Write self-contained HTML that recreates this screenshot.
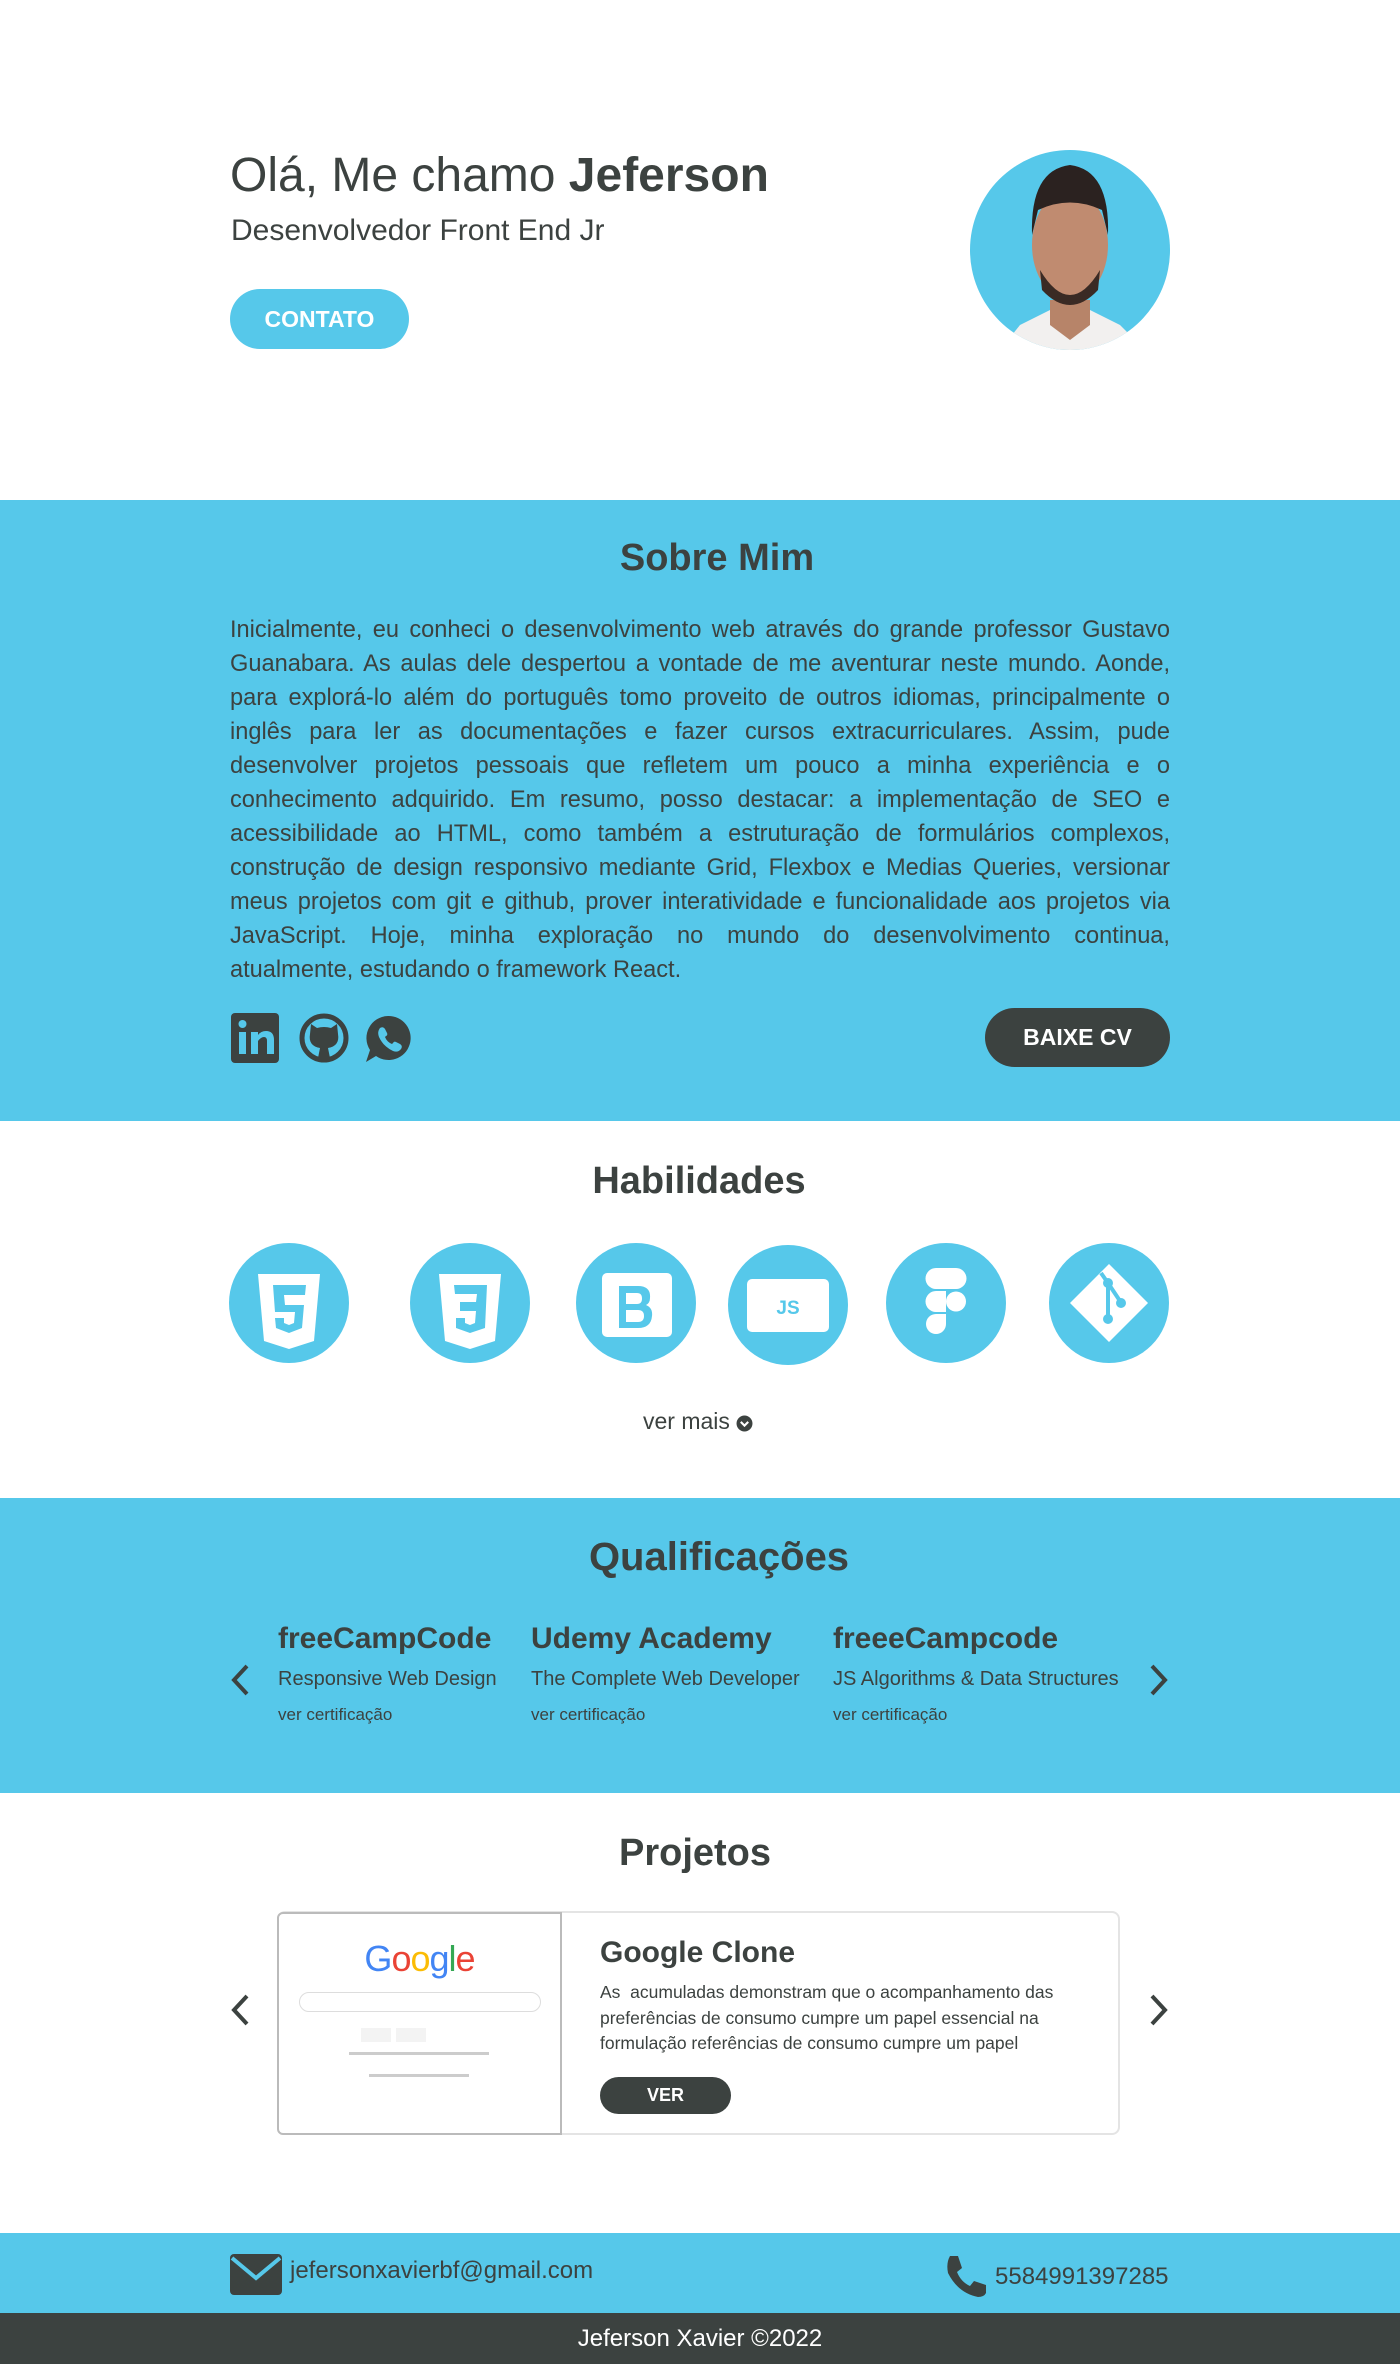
<!DOCTYPE html>
<html><head><meta charset="utf-8"><style>
*{margin:0;padding:0;box-sizing:border-box}
body{width:1400px;height:2364px;position:relative;font-family:"Liberation Sans",Arial,sans-serif;color:#3c4240;background:#fff;overflow:hidden}
.a{position:absolute}
.blue{background:#56c8ea}
.btn{border-radius:30px;font-weight:bold;display:flex;align-items:center;justify-content:center}
h2{position:absolute;left:0;width:1400px;text-align:center;font-size:38px;font-weight:bold}
.circ{position:absolute;width:120px;height:120px;border-radius:50%;background:#56c8ea;top:1243px}
.circ svg{position:absolute;left:0;top:0}
.q{position:absolute;top:1619px}
.q b{display:block;font-size:30px;line-height:40px}
.q .s{font-size:20px;margin-top:6px;line-height:28px}
.q .v{font-size:17px;margin-top:12px}
</style></head><body>

<div class="a" style="left:230px;top:148px;font-size:48px;line-height:56px">Olá, Me chamo <b>Jeferson</b></div>
<div class="a" style="left:231px;top:214px;font-size:30px">Desenvolvedor Front End Jr</div>
<div class="a btn blue" style="left:230px;top:289px;width:179px;height:60px;color:#fff;font-size:23px">CONTATO</div>
<div class="a" style="left:970px;top:150px;width:200px;height:200px;border-radius:50%;background:#56c8ea;overflow:hidden">
<svg width="200" height="200" viewBox="0 0 200 200">
<path d="M30 200 L50 175 L80 160 L120 160 L150 175 L175 200Z" fill="#f2f0ef"/>
<path d="M80 150 L80 175 L100 190 L120 175 L120 150Z" fill="#b78469"/>
<ellipse cx="100" cy="95" rx="38" ry="55" fill="#c08b70"/>
<path d="M62 85 Q60 20 100 15 Q140 20 138 85 L132 60 Q100 45 68 60Z" fill="#2b2220"/>
<path d="M70 120 Q100 170 130 120 L128 140 Q100 170 72 140Z" fill="#3a2a24"/>
</svg></div>

<div class="a blue" style="left:0;top:500px;width:1400px;height:621px"></div>
<h2 style="top:537px;left:17px">Sobre Mim</h2>
<div class="a" style="left:230px;top:613px;width:940px;font-size:23.6px;line-height:34px;text-align:justify;text-align-last:justify">Inicialmente, eu conheci o desenvolvimento web através do grande professor Gustavo Guanabara. As aulas dele despertou a vontade de me aventurar neste mundo. Aonde, para explorá-lo além do português tomo proveito de outros idiomas, principalmente o inglês para ler as documentações e fazer cursos extracurriculares. Assim, pude desenvolver projetos pessoais que refletem um pouco a minha experiência e o conhecimento adquirido. Em resumo, posso destacar: a implementação de SEO e acessibilidade ao HTML, como também a estruturação de formulários complexos, construção de design responsivo mediante Grid, Flexbox e Medias Queries, versionar meus projetos com git e github, prover interatividade e funcionalidade aos projetos via JavaScript. Hoje, minha exploração no mundo do desenvolvimento continua,</div>
<div class="a" style="left:230px;top:953px;font-size:23.6px;line-height:34px">atualmente, estudando o framework React.</div>
<svg class="a" style="left:230px;top:1012px" width="190" height="52" viewBox="0 0 190 52">
<rect x="1" y="1" width="48" height="50" rx="4" fill="#3c4240"/>
<rect x="9" y="20" width="7" height="22" fill="#56c8ea"/><circle cx="12.5" cy="12" r="4" fill="#56c8ea"/>
<path d="M21 20h7v3q3-4 8-4q8 0 8 9v14h-7v-13q0-4-3-4t-6 4v13h-7z" fill="#56c8ea"/>
<circle cx="94" cy="26" r="22" fill="none" stroke="#3c4240" stroke-width="5"/>
<path d="M80 22 L81 12 L87 16 Q94 14 101 16 L107 12 L108 22 Q110 34 98 36 L100 46 L88 46 L90 36 Q78 34 80 22Z" fill="#3c4240"/>
<path d="M158 4a22 22 0 1 1 -12 40 L136 50 L140 38 A22 22 0 0 1 158 4Z" fill="#3c4240"/>
<path d="M150 16q3-2 5 1l2 4q1 2-1 3l-1 1q2 5 7 7l1-1q1-2 3-1l4 2q3 2 1 5q-3 4-8 2q-10-5-14-14q-2-5 1-9z" fill="#56c8ea"/>
</svg>
<div class="a btn" style="left:985px;top:1008px;width:185px;height:59px;background:#3c4240;color:#fff;font-size:23px">BAIXE CV</div>

<h2 style="top:1160px;left:-1px">Habilidades</h2>
<div class="circ" style="left:229px"><svg width="120" height="120" viewBox="0 0 120 120"><path d="M29 31h62l-6 67-25 8-25-8z" fill="#fff"/><path d="M44 42h33l-1 10h-21l1 10h19l-2 23-13 5-13-5-1-10h9v5l5 2 5-2 1-11h-20z" fill="#56c8ea"/></svg></div>
<div class="circ" style="left:410px"><svg width="120" height="120" viewBox="0 0 120 120"><path d="M29 31h62l-6 67-25 8-25-8z" fill="#fff"/><path d="M44 42h33l-2 43-15 5-14-5v-10h9v5l5 2 5-2 1-12h-16v-9h16l1-8h-22z" fill="#56c8ea"/></svg></div>
<div class="circ" style="left:576px"><svg width="120" height="120" viewBox="0 0 120 120"><rect x="26" y="30" width="70" height="64" rx="5" fill="#fff"/><path d="M43 43h19q13 0 12 12q0 5-4 7q7 3 6 11q-1 12-14 12h-19z M50 50v11h11q5 0 5-5.5t-5-5.5z M50 67v12h12q6 0 6-6t-6-6z" fill="#56c8ea" fill-rule="evenodd"/></svg></div>
<div class="circ" style="left:728px;top:1245px"><svg width="120" height="120" viewBox="0 0 120 120"><rect x="19" y="34" width="82" height="53" rx="5" fill="#fff"/><text x="60" y="69" text-anchor="middle" font-family="Liberation Sans" font-weight="bold" font-size="19" fill="#56c8ea">JS</text></svg></div>
<div class="circ" style="left:886px"><svg width="120" height="120" viewBox="0 0 120 120"><path d="M60 25h-10a10 10 0 0 0 0 21h10z M60 25h10a10 10 0 0 1 0 21h-10z M60 48h-10a10 10 0 0 0 0 21h10z M50 71a10 10 0 1 0 10 10v-10z" fill="#fff"/><circle cx="70" cy="58.5" r="10" fill="#fff"/></svg></div>
<div class="circ" style="left:1049px"><svg width="120" height="120" viewBox="0 0 120 120"><path d="M60 21l39 39-39 39-39-39z" fill="#fff"/><path d="M52 30l7 10v34 M59 40l12 18" stroke="#56c8ea" stroke-width="4" fill="none"/><circle cx="59" cy="40" r="5" fill="#56c8ea"/><circle cx="72" cy="60" r="5" fill="#56c8ea"/><circle cx="59" cy="76" r="5" fill="#56c8ea"/></svg></div>
<div class="a" style="left:643px;top:1408px;font-size:23px">ver mais <svg width="17" height="17" viewBox="0 0 16 16" style="vertical-align:-3px"><circle cx="8" cy="8" r="7.5" fill="#3c4240"/><path d="M4.5 6.5l3.5 3.5 3.5-3.5" stroke="#fff" stroke-width="2" fill="none"/></svg></div>

<div class="a blue" style="left:0;top:1498px;width:1400px;height:295px"></div>
<h2 style="top:1535px;left:19px;font-size:40px">Qualificações</h2>
<svg class="a" style="left:229px;top:1664px" width="22" height="32"><path d="M18 2L5 16l13 14" stroke="#3c4240" stroke-width="4" fill="none"/></svg>
<svg class="a" style="left:1148px;top:1664px" width="22" height="32"><path d="M4 2l13 14-13 14" stroke="#3c4240" stroke-width="4" fill="none"/></svg>
<div class="q" style="left:278px"><b>freeCampCode</b><div class="s">Responsive Web Design</div><div class="v">ver certificação</div></div>
<div class="q" style="left:531px"><b>Udemy Academy</b><div class="s">The Complete Web Developer</div><div class="v">ver certificação</div></div>
<div class="q" style="left:833px"><b>freeeCampcode</b><div class="s">JS Algorithms &amp; Data Structures</div><div class="v">ver certificação</div></div>

<h2 style="top:1832px;left:-5px">Projetos</h2>
<svg class="a" style="left:229px;top:1994px" width="22" height="32"><path d="M18 2L5 16l13 14" stroke="#3c4240" stroke-width="4" fill="none"/></svg>
<svg class="a" style="left:1148px;top:1994px" width="22" height="32"><path d="M4 2l13 14-13 14" stroke="#3c4240" stroke-width="4" fill="none"/></svg>
<div class="a" style="left:277px;top:1911px;width:843px;height:224px;border:2px solid #e4e4e4;border-radius:8px"></div>
<div class="a" style="left:277px;top:1912px;width:285px;height:223px;border:2px solid #bbb;border-radius:6px 0 0 6px;background:#fff">
<div class="a" style="left:0;width:281px;top:24px;text-align:center;font-size:36px;letter-spacing:-1px"><span style="color:#4285f4">G</span><span style="color:#ea4335">o</span><span style="color:#fbbc05">o</span><span style="color:#4285f4">g</span><span style="color:#34a853">l</span><span style="color:#ea4335">e</span></div>
<div class="a" style="left:20px;top:78px;width:242px;height:20px;border:1px solid #ddd;border-radius:10px"></div>
<div class="a" style="left:82px;top:114px;width:30px;height:14px;background:#f3f3f3"></div>
<div class="a" style="left:117px;top:114px;width:30px;height:14px;background:#f3f3f3"></div>
<div class="a" style="left:70px;top:138px;width:140px;height:3px;background:#ccc"></div>
<div class="a" style="left:90px;top:160px;width:100px;height:3px;background:#ccc"></div>
</div>
<div class="a" style="left:600px;top:1936px;font-size:30px;font-weight:bold">Google Clone</div>
<div class="a" style="left:600px;top:1980px;width:480px;font-size:17.5px;line-height:25.5px">As&nbsp; acumuladas demonstram que o acompanhamento das preferências de consumo cumpre um papel essencial na formulação referências de consumo cumpre um papel</div>
<div class="a btn" style="left:600px;top:2077px;width:131px;height:37px;background:#3c4240;color:#fff;font-size:18px">VER</div>

<div class="a blue" style="left:0;top:2233px;width:1400px;height:80px"></div>
<svg class="a" style="left:230px;top:2254px" width="52" height="42" viewBox="0 0 52 42"><rect x="0" y="0" width="52" height="41" rx="4" fill="#3c4240"/><path d="M2 4l24 20 24-20" stroke="#56c8ea" stroke-width="4" fill="none"/></svg>
<div class="a" style="left:290px;top:2257px;font-size:24px">jefersonxavierbf@gmail.com</div>
<svg class="a" style="left:944px;top:2254px" width="44" height="44" viewBox="0 0 44 44"><path d="M6 2l8 0 4 12-5 4q4 10 13 14l4-5 12 4 0 8q-2 4-8 4q-20-4-30-24q-2-10 2-17z" fill="#3c4240"/></svg>
<div class="a" style="left:995px;top:2263px;font-size:24px">5584991397285</div>
<div class="a" style="left:0;top:2313px;width:1400px;height:51px;background:#3c4240;color:#fff;font-size:24px;text-align:center;line-height:51px">Jeferson Xavier ©2022</div>
</body></html>
